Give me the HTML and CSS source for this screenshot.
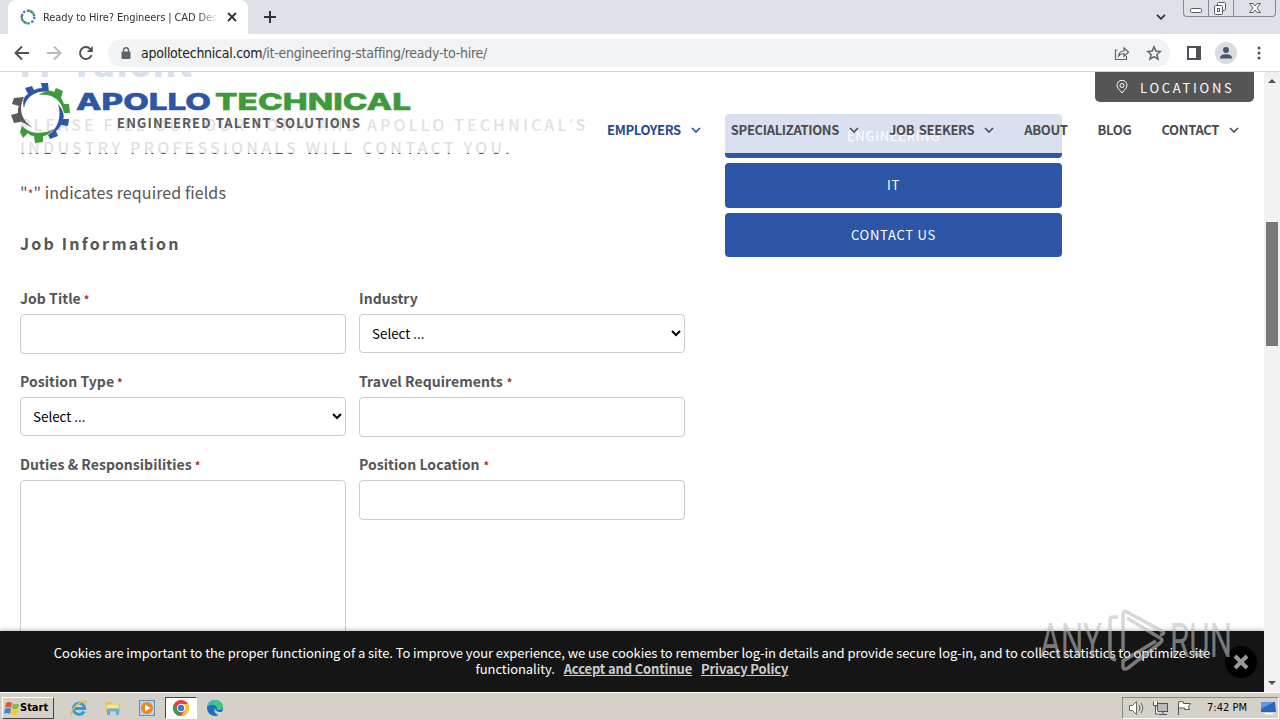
FILE: index.html
```html
<!DOCTYPE html>
<html lang="en">
<head>
    <meta charset="UTF-8">
    <meta name="viewport" content="width=device-width, initial-scale=1.0">
    <title>Ready to Hire? Engineers | CAD Designers</title>
    <link rel="stylesheet" href="styles.css">
</head>
<body>
    <div class="tabstrip">
        <div class="tab">
            <svg class="favicon" width="16" height="16" viewBox="0 0 16 16" fill="none" stroke-width="2.4">
                <circle cx="8" cy="8" r="6.300" stroke="#4a76b8" stroke-dasharray="2.2 1.760"/>
                <path d="M9 1.800a6.300 6.300 0 0 1 5 4.500M2.500 11a6.300 6.300 0 0 0 5 3.200" stroke="#5fae57" stroke-dasharray="2.4 1.2"/>
                <path d="M1.800 9a6.300 6.300 0 0 1 1-4" stroke="#777" stroke-dasharray="2 1"/>
            </svg>
            <span class="tab-title">Ready to Hire? Engineers | CAD Desig</span>
            <svg class="tab-close" width="10" height="10" viewBox="0 0 10 10" stroke="#333" stroke-width="1.8"><path d="M1 1l8 8M9 1l-8 8"/></svg>
        </div>
        <svg class="new-tab" width="12" height="12" viewBox="0 0 12 12" stroke="#333" stroke-width="2"><path d="M6 0v12M0 6h12"/></svg>
        <svg class="tab-search" width="10" height="6" viewBox="0 0 10 6" fill="none" stroke="#333" stroke-width="1.8"><path d="M1 .8l4 4 4-4"/></svg>
        <div class="window-buttons">
            <span class="wb"><svg width="26" height="16" viewBox="0 0 26 16"><rect x="6.500" y="8.500" width="11" height="4" rx="1" fill="#fff" stroke="#555c68"/></svg></span>
            <span class="wb"><svg width="25" height="16" viewBox="0 0 25 16" fill="#fff" stroke="#555c68"><rect x="8.500" y="2.500" width="8" height="8" rx="1"/><rect x="5.500" y="5.500" width="8" height="9" rx="1"/><rect x="8.500" y="8.500" width="2" height="3"/></svg></span>
            <span class="wb wide"><svg width="42" height="16" viewBox="0 0 42 16"><path d="M15.500 3.500h3.500l2 2.500 2-2.500h3.500l-3.500 4.500 3.500 4.500h-3.500l-2-2.500-2 2.500h-3.500l3.500-4.500z" fill="#fff" stroke="#555c68"/></svg></span>
        </div>
    </div>

    <div class="toolbar">
        <div class="nav-icons">
            <svg width="16" height="16" viewBox="0 0 16 16" fill="none" stroke="#4d5156" stroke-width="1.900"><path d="M15 8H2M8 1.500L1.500 8 8 14.500"/></svg>
            <svg width="16" height="16" viewBox="0 0 16 16" fill="none" stroke="#b8babd" stroke-width="1.900"><path d="M1 8h13M8 1.500L14.500 8 8 14.500"/></svg>
            <svg width="16" height="16" viewBox="0 0 16 16" fill="none" stroke="#4d5156" stroke-width="1.900"><path d="M13.600 10.200A6 6 0 1 1 12.300 3.800L14 5.500"/><path d="M14.800 1v6h-6z" fill="#4d5156" stroke="none"/></svg>
        </div>
        <div class="address">
            <svg class="lock" width="10" height="12" viewBox="0 0 10 12"><path d="M2.500 5V3.300a2.500 2.500 0 0 1 5 0V5" fill="none" stroke="#5f6368" stroke-width="1.400"/><rect x=".5" y="4.500" width="9" height="7.500" rx="1" fill="#5f6368"/></svg>
            <span class="url"><span class="host">apollotechnical.com</span>/it-engineering-staffing/ready-to-hire/</span>
            <svg class="share" width="16" height="16" viewBox="0 0 16 16" fill="none" stroke="#5f6368" stroke-width="1.200"><path d="M3.500 5H1.500v9.500h11V11M4.500 11c.5-3.500 2.500-5 5.500-5V3l4.500 4.200L10 11.300V8.500c-2.500 0-4 .7-5.500 2.500z"/></svg>
            <svg class="star" width="16" height="16" viewBox="0 0 16 16" fill="none" stroke="#5f6368" stroke-width="1.500"><path d="M8 1.800l1.800 4.300 4.600.4-3.500 3 1.100 4.600L8 11.600l-4 2.500 1.100-4.600-3.500-3 4.600-.4z"/></svg>
        </div>
        <svg class="panel" width="14" height="14" viewBox="0 0 14 14"><rect x="1" y="1" width="12" height="12" fill="none" stroke="#4d5156" stroke-width="2"/><path d="M9 1h4v12H9z" fill="#4d5156"/></svg>
        <svg class="avatar" width="22" height="22" viewBox="0 0 22 22"><circle cx="11" cy="11" r="11" fill="#d9dce1"/><circle cx="11" cy="8" r="3" fill="#47546f"/><path d="M5 16.500c0-3 2.500-4.300 6-4.300s6 1.300 6 4.300z" fill="#47546f"/></svg>
        <svg class="menu" width="4" height="14" viewBox="0 0 4 14" fill="#4d5156"><circle cx="2" cy="2" r="1.500"/><circle cx="2" cy="7" r="1.500"/><circle cx="2" cy="12" r="1.500"/></svg>
    </div>

    <div class="viewport">
        <div class="page">
            <main class="content">
                <div class="form-column">
                    <h1>IT Talent</h1>
                    <p class="intro"><span class="intro-first">PLEASE FILL OUT OUR FORM AND APOLLO TECHNICAL<span class="apos">’</span>S</span><br>INDUSTRY PROFESSIONALS WILL CONTACT YOU.</p>
                    <p class="required-note">"<span class="req">*</span>" indicates required fields</p>
                    <h3>Job Information</h3>
                    <form class="fields">
                        <div class="field">
                            <label for="title">Job Title<span class="req">*</span></label>
                            <input type="text" id="title">
                        </div>
                        <div class="field">
                            <label for="industry">Industry</label>
                            <select id="industry"><option>Select ...</option></select>
                        </div>
                        <div class="field">
                            <label for="type">Position Type<span class="req">*</span></label>
                            <select id="type"><option>Select ...</option></select>
                        </div>
                        <div class="field">
                            <label for="travel">Travel Requirements<span class="req far">*</span></label>
                            <input type="text" id="travel">
                        </div>
                        <div class="field">
                            <label for="duties">Duties &amp; Responsibilities<span class="req">*</span></label>
                            <textarea id="duties"></textarea>
                        </div>
                        <div class="field">
                            <label for="location">Position Location<span class="req far">*</span></label>
                            <input type="text" id="location">
                        </div>
                    </form>
                </div>
                <div class="side">
                    <a class="side-button">ENGINEERING</a>
                    <a class="side-button">IT</a>
                    <a class="side-button">CONTACT US</a>
                </div>
            </main>

            <header class="site-header">
                <svg class="logo" width="404" height="64" viewBox="0 0 404 64">
                    <g fill="#2d57a6">
                        <path d="M13 27C11 20 13 15 17 13L14 7l7-2 2 4q4-2 8-2l-1-5 7 0 1 9C26 9 15 15 13 27z"/>
                        <path d="M47 23C54 31 53 37 52 38l6 0-1 7-7-1q-2 4-5 6l2 5-8 3-2-4C47 48 51 35 47 23z"/>
                    </g>
                    <g fill="#3f9a3a">
                        <path d="M28 14C34 9 40 9 43 11l2-4 7 3-2 7q2 3 3 6l5 0 1 9-6 0C51 20 42 12 28 14z"/>
                        <path d="M43 48C38 54 34 55 32 55l0 6-8 1-1-7q-4 0-6-3l-5 5-3-6 2-6C19 53 31 54 43 48z"/>
                    </g>
                    <path d="M22 47C14 43 10 40 9 41l-6 1-3-8 7-2q-1-4 1-7l-7-2 2-6 10-1C7 28 10 39 22 47z" fill="#5b5b5d"/>
                    <g font-family="Inter" font-weight="800" font-size="23" stroke-width=".5">
                        <text x="65" y="28.500" textLength="135" lengthAdjust="spacingAndGlyphs" fill="#2d57a6" stroke="#2d57a6">APOLLO</text>
                        <text x="204" y="28.500" textLength="196" lengthAdjust="spacingAndGlyphs" fill="#3f9a3a" stroke="#3f9a3a">TECHNICAL</text>
                    </g>
                    <text x="106" y="46.500" textLength="243" font-family="Noto Sans CJK SC" font-weight="700" font-size="13" fill="#58585a">ENGINEERED TALENT SOLUTIONS</text>
                </svg>
                <a class="locations">
                    <svg width="12" height="14" viewBox="0 0 12 14" fill="none" stroke="#fff"><path d="M6 13C3 9.500 1 7.500 1 5.300a5 5 0 0 1 10 0C11 7.500 9 9.500 6 13z"/><circle cx="6" cy="5.500" r="2"/></svg>
                    <span>LOCATIONS</span>
                </a>
                <nav class="main-nav">
                    <a class="active"><span>EMPLOYERS</span><svg class="chev" viewBox="0 0 10 6"><path d="M1 1l4 4 4-4"/></svg></a>
                    <a><span>SPECIALIZATIONS</span><svg class="chev" viewBox="0 0 10 6"><path d="M1 1l4 4 4-4"/></svg></a>
                    <a><span>JOB SEEKERS</span><svg class="chev" viewBox="0 0 10 6"><path d="M1 1l4 4 4-4"/></svg></a>
                    <a><span>ABOUT</span></a>
                    <a><span>BLOG</span></a>
                    <a><span>CONTACT</span><svg class="chev" viewBox="0 0 10 6"><path d="M1 1l4 4 4-4"/></svg></a>
                </nav>
            </header>

            <div class="cookie-bar">
                <p>Cookies are important to the proper functioning of a site. To improve your experience, we use cookies to remember log-in details and provide secure log-in, and to collect statistics to optimize site<br>functionality. <a>Accept and Continue</a> <a>Privacy Policy</a></p>
                <span class="cookie-close"><svg width="16" height="16" viewBox="0 0 16 16" stroke="#999" stroke-width="4"><path d="M2 2l12 12M14 2L2 14"/></svg></span>
            </div>
        </div>
        <div class="scrollbar">
            <svg width="8" height="4" viewBox="0 0 8 4" fill="#505050"><path d="M4 0l4 4H0z"/></svg>
            <div class="track"><div class="thumb"></div></div>
            <svg width="8" height="4" viewBox="0 0 8 4" fill="#505050"><path d="M4 4l4-4H0z"/></svg>
        </div>
    </div>

    <svg class="watermark" width="200" height="70" viewBox="0 0 200 70">
        <g font-family="Roboto" font-weight="400" font-size="48">
            <text x="2" y="52" textLength="62" lengthAdjust="spacingAndGlyphs">ANY</text>
            <text x="132" y="52" textLength="62" lengthAdjust="spacingAndGlyphs">RUN</text>
        </g>
        <path d="M80 12h-5q-3 0-3 4v33q0 3 3 5l3 1M85 46V9q0-4 4-2l35 19q4 3-2 4M85 13v30M89 13l33 20q4 2 0 5L90 63q-5 3-5-2v-5l33-20"/>
    </svg>

    <div class="taskbar">
        <div class="start">
            <svg width="16" height="16" viewBox="0 0 16 16"><path d="M2 3q3-2 6 0L7 8q-3-2-6 0z" fill="#e8552b"/><path d="M9 3.500q3 1.500 6 0L14 8.500q-3 1.500-6 0z" fill="#7dbb42"/><path d="M1 9q3-2 6 0l-1 5q-3-2-6 0z" fill="#3c82d6"/><path d="M8 9.500q3 1.500 6 0L13 14.500q-3 1.500-6 0z" fill="#f7c52d"/></svg>
            <span>Start</span>
        </div>
        <div class="quick">
            <span class="task"><svg width="18" height="18" viewBox="0 0 18 18" fill="none"><path d="M14 12.500A5.700 5.700 0 1 1 14.700 9.500H5" stroke="#2f9bdc" stroke-width="2.800"/><path d="M2 16C-1 14 5 6 11 3q6-2.500 5 2" stroke="#e5bd3a" stroke-width="1.500"/></svg></span>
            <span class="task"><svg width="18" height="18" viewBox="0 0 18 18"><path d="M2 3h6l1 2h7v8H2z" fill="#e0c257"/><path d="M3 5.500h12v6H3z" fill="#f5e59b"/><path d="M3 16V9.500h12V16h-3v-4H6v4z" fill="#69acd8"/></svg></span>
            <span class="task"><svg width="18" height="18" viewBox="0 0 18 18"><rect x="1.500" y="1.500" width="15" height="15" fill="#b7d4ec" stroke="#5e93bd"/><circle cx="9" cy="9" r="6" fill="#f08519"/><path d="M7 5.500v7l5.500-3.500z" fill="#fff"/></svg></span>
            <span class="task current"><svg width="18" height="18" viewBox="0 0 18 18"><circle cx="9" cy="9" r="8" fill="#e6412f"/><path d="M2 5l7 12A8 8 0 0 1 2 5z" fill="#2fa04c"/><path d="M9 5h7A8 8 0 0 1 9 17l3.500-6z" fill="#fbc62b"/><circle cx="9" cy="9" r="4.200" fill="#fff"/><circle cx="9" cy="9" r="3.200" fill="#3a78e0"/></svg></span>
            <span class="task"><svg width="18" height="18" viewBox="0 0 18 18"><circle cx="9" cy="9" r="8" fill="#1872c4"/><path d="M1.500 8C2 3 6 1 9 1c5 0 8 3.500 8 6.500 0 2.500-2 3.500-4 3.500-2 0-3-1-2-2 0-3-6-5-9.500-1z" fill="#45c77b"/><path d="M1.500 7.500C3 3 6 1 9 1l3 .6C9 3 4 4 1.500 7.500z" fill="#35b8d8"/><path d="M9 9c0 3 3 5 8 3.500l1 3-4 1c-4-1-7-4-5-7.500z" fill="#d5d1c9"/></svg></span>
        </div>
        <div class="tray">
            <svg width="18" height="16" viewBox="0 0 18 16" fill="#fff" stroke="#666"><path d="M1.500 5.500h3l4-4v13l-4-4h-3z"/><path d="M11 5q2 3 0 6M13 3q3.500 5 0 10" fill="none"/></svg>
            <svg width="18" height="16" viewBox="0 0 18 16" fill="#fff" stroke="#555"><rect x="5.500" y="3.500" width="10" height="8" fill="#bbb"/><path d="M7 14.500h8M11 12v2M1.500 1.500v4h4v-4M3.500 6v8h3" /></svg>
            <svg width="18" height="16" viewBox="0 0 18 16" fill="#fff" stroke="#555"><path d="M2.500 15V1.500M2.500 2q3-1 5 0v1.500h7l-2 3 1 3h-5v-1.500h-6z"/></svg>
            <span class="clock">7:42 PM</span>
            <svg width="16" height="14" viewBox="0 0 16 14"><path d="M1 1h14l1 10H1z" fill="#2668c0"/><path d="M1 1h13L1 8z" fill="#5a9be2"/><path d="M5 12h8v1.500H5z" fill="#fff"/></svg>
        </div>
    </div>
</body>
</html>
```
FILE: styles.css
```css
* {
    box-sizing: border-box;
}
body {
    margin: 0;
    width: 1280px;
    height: 720px;
    overflow: hidden;
    display: flex;
    flex-direction: column;
    position: relative;
    background: #fff;
    color: #555;
    font-family: "Noto Sans CJK SC", "Noto Sans", sans-serif;
}
svg {
    display: block;
    flex-shrink: 0;
}

/* browser window */
.tabstrip {
    height: 34px;
    flex-shrink: 0;
    display: flex;
    background: #dee1e8;
    padding-left: 8px;
}
.tab {
    width: 240px;
    height: 34px;
    display: flex;
    align-items: center;
    background: #fff;
    border-radius: 8px 8px 0 0;
    padding: 0 11px 0 12px;
}
.tab-title {
    width: 175px;
    margin-left: 7px;
    overflow: hidden;
    white-space: nowrap;
    font-family: "DejaVu Sans Condensed", "DejaVu Sans", sans-serif;
    font-size: 11px;
    letter-spacing: -0.1px;
    color: #333;
    -webkit-mask-image: linear-gradient(to right, #000 155px, transparent 175px);
}
.tab-close {
    margin-left: 9px;
}
.new-tab {
    margin: 11px 0 0 16px;
}
.tab-search {
    margin: 14px 17px 0 auto;
}
.window-buttons {
    display: flex;
    width: 93px;
    height: 17px;
    margin-right: 4px;
    border: 1px solid #858b96;
    border-top: 0;
    border-radius: 0 0 4px 4px;
}
.wb {
    width: 25px;
    border-right: 1px solid #858b96;
}
.wb.wide {
    width: 41px;
    border: 0;
}
.toolbar {
    height: 38px;
    flex-shrink: 0;
    display: flex;
    align-items: center;
    background: #fff;
    border-bottom: 1px solid #d5d7dc;
    padding-left: 14px;
}
.nav-icons {
    display: flex;
    gap: 16px;
}
.address {
    width: 1062px;
    height: 28px;
    margin-left: 14px;
    padding: 0 8px 0 13px;
    display: flex;
    align-items: center;
    border-radius: 14px;
    background: #f1f3f4;
}
.url {
    flex: 1;
    margin-left: 10px;
    font-family: "DejaVu Sans Condensed", "DejaVu Sans", sans-serif;
    font-size: 14px;
    letter-spacing: -0.26px;
    color: #666;
}
.host {
    color: #222;
}
.star {
    margin-left: 16px;
}
.panel {
    margin-left: 17px;
}
.avatar {
    margin-left: 14px;
}
.menu {
    margin-left: 20px;
}

/* site */
.viewport {
    height: 620px;
    flex-shrink: 0;
    display: flex;
}
.page {
    position: relative;
    width: 1264px;
    height: 620px;
    overflow: hidden;
}
.content {
    display: flex;
    gap: 40px;
    padding-left: 20px;
}
.form-column {
    width: 665px;
    margin-top: -28px;
}
h1 {
    margin: 0 0 29px;
    font-family: Inter, sans-serif;
    font-size: 36px;
    font-weight: 800;
    line-height: 40px;
    letter-spacing: 2.3px;
    color: #2d57a6;
}
.intro {
    margin: 0 0 21px;
    font-size: 16px;
    font-weight: 500;
    line-height: 23px;
    letter-spacing: 3.17px;
    white-space: nowrap;
}
.intro-first {
    letter-spacing: 3.1px;
}
.apos {
    font-family: "Noto Sans", sans-serif;
    line-height: 1;
}
.required-note {
    margin: 0 0 25px;
    font-size: 16px;
    line-height: 24px;
    letter-spacing: 0.1px;
}
.required-note .req {
    font-size: 12px;
    margin: 0;
}
h3 {
    margin: 0 0 33px;
    font-size: 16px;
    font-weight: 700;
    line-height: 24px;
    letter-spacing: 2.2px;
}
.fields {
    display: grid;
    grid-template-columns: 326px 326px;
    grid-auto-rows: 64px;
    gap: 19px 13px;
}
.field {
    display: flex;
    flex-direction: column;
}
label {
    height: 20px;
    margin-bottom: 6px;
    font-size: 14px;
    font-weight: 700;
    line-height: 20px;
    letter-spacing: 0.05px;
    white-space: nowrap;
}
.req {
    color: #b02a25;
    font-size: 11px;
    margin-left: 3px;
}
.req.far {
    margin-left: 4px;
}
input, select, textarea {
    width: 326px;
    height: 40px;
    flex-shrink: 0;
    border: 1px solid #ccc;
    border-radius: 4px;
    background: #fff;
    margin: 0;
    outline: none;
}
select {
    height: 39px;
    padding: 0 0 2px 8px;
    font-family: inherit;
    font-size: 13.4px;
    color: #000;
}
textarea {
    height: 200px;
    resize: none;
}
.side {
    width: 337px;
    padding-top: 42px;
    display: flex;
    flex-direction: column;
    gap: 5px;
}
.side-button {
    height: 44.4px;
    flex-shrink: 0;
    border-radius: 4px;
    background: #2d57a6;
    color: #fff;
    font-size: 13px;
    line-height: 44.4px;
    letter-spacing: 0.75px;
    text-align: center;
}

/* translucent sticky header over the form */
.site-header {
    position: absolute;
    top: 0;
    left: 0;
    width: 1264px;
    height: 81px;
    padding: 9px 25px 0 11px;
    display: flex;
    background: rgba(255, 255, 255, 0.82);
}
.locations {
    position: absolute;
    top: 0;
    right: 10px;
    width: 159px;
    height: 30px;
    padding-left: 21px;
    display: flex;
    align-items: center;
    gap: 12px;
    border-radius: 0 0 5px 5px;
    background: #555;
    color: #fff;
    font-size: 13px;
    letter-spacing: 2.7px;
}
.main-nav {
    margin: 39px 0 0 auto;
    display: flex;
    gap: 30px;
    height: 20px;
    font-size: 13px;
    font-weight: 700;
    line-height: 20px;
    letter-spacing: -0.34px;
    word-spacing: 2px;
    color: #4b4b4f;
    white-space: nowrap;
}
.main-nav a {
    display: flex;
    align-items: center;
    gap: 10px;
}
.main-nav .active {
    color: #234a94;
}
.chev {
    width: 10px;
    height: 6px;
    fill: none;
    stroke: currentColor;
    stroke-width: 1.6;
}
.cookie-bar {
    position: absolute;
    left: 0;
    bottom: 0;
    width: 1264px;
    height: 61px;
    background: #151515;
    box-shadow: 0 0 5px rgba(0, 0, 0, 0.4);
    color: #fff;
    font-size: 13px;
    line-height: 16px;
    letter-spacing: -0.07px;
    text-align: center;
}
.cookie-bar p {
    margin: 14px 0 0;
    white-space: nowrap;
}
.cookie-bar a {
    margin-left: 6px;
    font-weight: 700;
    letter-spacing: -0.14px;
    color: #ccc;
    text-decoration: underline;
}
.cookie-close {
    position: absolute;
    right: 7px;
    top: 15px;
    width: 32px;
    height: 32px;
    padding: 8px;
    border-radius: 50%;
    background: #000;
}
.scrollbar {
    width: 16px;
    display: flex;
    flex-direction: column;
    align-items: center;
    padding: 7px 0;
    background: #f1f1f1;
}
.track {
    flex: 1;
    width: 12px;
    padding-top: 139px;
}
.thumb {
    height: 124px;
    background: #787878;
}
.watermark {
    position: absolute;
    left: 1038px;
    top: 605px;
    fill: rgba(190, 190, 190, 0.6);
}
.watermark path {
    fill: none;
    stroke: rgba(190, 190, 190, 0.6);
    stroke-width: 3.5;
}

/* taskbar */
.taskbar {
    height: 28px;
    flex-shrink: 0;
    display: flex;
    align-items: center;
    padding: 2px 1px 0 2px;
    background: #d5d1c9;
    border-top: 1px solid #fff;
    color: #000;
    font-family: "DejaVu Sans Condensed", "DejaVu Sans", sans-serif;
    font-size: 11px;
}
.start {
    width: 52px;
    height: 22px;
    display: flex;
    align-items: center;
    padding-left: 1px;
    border: 1px solid;
    border-color: #fff #444 #444 #fff;
    font-weight: 700;
}
.quick {
    display: flex;
    gap: 2px;
    margin-left: 9px;
}
.task {
    width: 32px;
    height: 22px;
    display: flex;
    align-items: center;
    justify-content: center;
}
.task.current {
    background: #fff;
    border: 1px solid;
    border-color: #444 #fff #fff #444;
}
.tray {
    width: 157px;
    height: 22px;
    margin-left: auto;
    padding: 0 2px 0 5px;
    display: flex;
    align-items: center;
    gap: 6px;
    border: 1px solid;
    border-color: #888 #fff #fff #888;
}
.clock {
    margin: 0 auto;
}
```
